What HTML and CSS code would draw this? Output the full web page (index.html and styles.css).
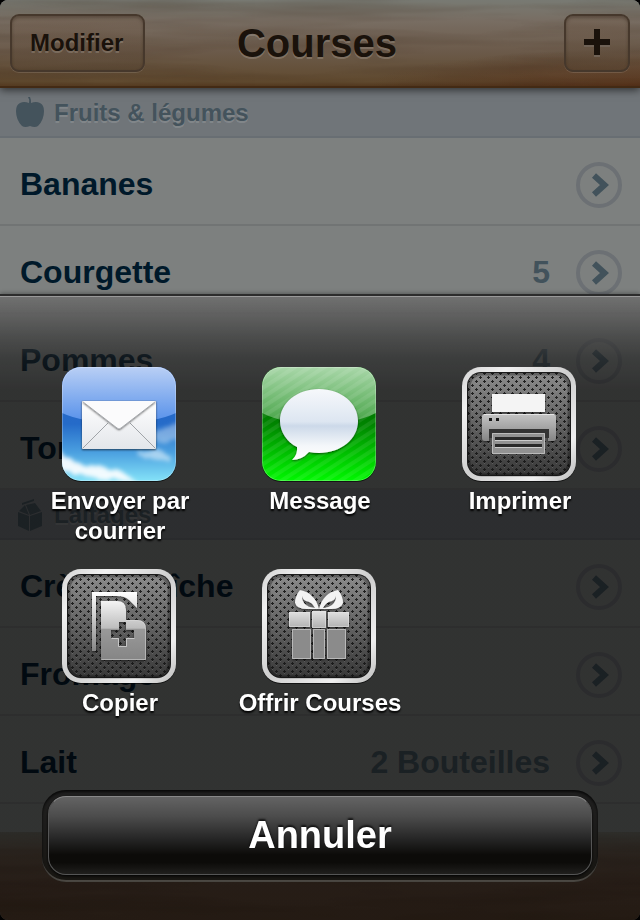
FILE: index.html
```html
<!DOCTYPE html>
<html lang="fr">
<head>
<meta charset="utf-8">
<meta name="viewport" content="width=device-width, initial-scale=1">
<title>Courses</title>
<link rel="stylesheet" href="styles.css">
</head>
<body>
<svg class="defs" aria-hidden="true">
  <defs>
    <filter id="grain" x="0" y="0" width="100%" height="100%" color-interpolation-filters="sRGB">
      <feTurbulence type="fractalNoise" baseFrequency="0.005 0.06" numOctaves="3" seed="8"/>
      <feColorMatrix values="0 0 0 0 0.2  0 0 0 0 0.12  0 0 0 0 0.06  2 0 0 0 -0.75"/>
    </filter>
    <filter id="cloud" x="-20%" y="-20%" width="140%" height="140%"><feTurbulence type="fractalNoise" baseFrequency="0.09" numOctaves="3" seed="3"/><feDisplacementMap in="SourceGraphic" scale="12" result="d"/><feGaussianBlur in="d" stdDeviation="2"/></filter>
    <filter id="soft" x="-20%" y="-20%" width="140%" height="150%"><feDropShadow dx="0" dy="1" stdDeviation="1" flood-color="#000" flood-opacity=".6"/></filter>
    <clipPath id="tile"><rect width="114" height="114" rx="19"/></clipPath>
    <linearGradient id="sky" x2="0" y2="1"><stop offset="0" stop-color="#2a63c4"/><stop offset=".5" stop-color="#256bc9"/><stop offset=".75" stop-color="#4ba0e0"/><stop offset="1" stop-color="#84e2f8"/></linearGradient>
    <linearGradient id="skygloss" x2="0" y2="1"><stop offset="0" stop-color="#b9cff5"/><stop offset="1" stop-color="#5590ea"/></linearGradient>
    <linearGradient id="paper" x2="0" y2="1"><stop offset="0" stop-color="#fff"/><stop offset="1" stop-color="#e3e6ea"/></linearGradient>
    <linearGradient id="green" x2="0" y2="1"><stop offset=".3" stop-color="#007000"/><stop offset=".5" stop-color="#008400"/><stop offset="1" stop-color="#00f800"/></linearGradient>
    <linearGradient id="greengloss" x2="0" y2="1"><stop offset="0" stop-color="#a9d7a9"/><stop offset="1" stop-color="#45a345"/></linearGradient>
    <linearGradient id="bubble" x2="0" y2="1"><stop offset="0" stop-color="#f6f8fb"/><stop offset=".46" stop-color="#dde6f1"/><stop offset=".52" stop-color="#ccd9e9"/><stop offset=".8" stop-color="#f4f7fa"/><stop offset="1" stop-color="#fff"/></linearGradient>
    <linearGradient id="frame" x2="1" y2="1"><stop offset="0" stop-color="#d4d4d4"/><stop offset=".2" stop-color="#f0f0f0"/><stop offset=".5" stop-color="#cfcfcf"/><stop offset=".8" stop-color="#efefef"/><stop offset="1" stop-color="#bbb"/></linearGradient>
    <linearGradient id="mesh" x2="0" y2="1"><stop offset="0" stop-color="#8a8a8a"/><stop offset=".5" stop-color="#626262"/><stop offset="1" stop-color="#383838"/></linearGradient>
    <linearGradient id="metal" x2="0" y2="1"><stop offset="0" stop-color="#e2e2e2"/><stop offset="1" stop-color="#b0b0b0"/></linearGradient>
    <linearGradient id="body" x2="0" y2="1"><stop offset="0" stop-color="#c4c4c4"/><stop offset="1" stop-color="#858585"/></linearGradient>
    <linearGradient id="page" x2="0" y2="1"><stop offset="0" stop-color="#f4f4f4"/><stop offset=".46" stop-color="#bdbdbd"/><stop offset=".48" stop-color="#999"/><stop offset="1" stop-color="#858585"/></linearGradient>
    <linearGradient id="backpage" gradientUnits="userSpaceOnUse" x1="0" y1="23" x2="0" y2="82"><stop offset="0" stop-color="#fff"/><stop offset="1" stop-color="#868686"/></linearGradient>
    <pattern id="holes" width="8" height="8" patternUnits="userSpaceOnUse"><path d="M1 2h3v1H1zM2 1h1v3H2zM5 6h3v1H5zM6 5h1v3H6z" fill="#161616" fill-opacity=".9"/><path d="M2 4h1v1H2zM6 0h1v1H6z" fill="#fff" fill-opacity=".15"/></pattern>
    <pattern id="stripes" width="10" height="8" patternUnits="userSpaceOnUse" patternTransform="rotate(-33)"><rect width="10" height="4" fill="#fff" fill-opacity=".08"/></pattern>
    <symbol id="plate" viewBox="0 0 116 116">
      <rect width="114" height="114" rx="19" y="1" fill="#000" fill-opacity=".6"/>
      <rect width="114" height="114" rx="19" fill="url(#frame)"/>
      <rect x="5" y="5" width="104" height="104" rx="14" fill="#222"/>
      <rect x="6" y="6" width="102" height="102" rx="13" fill="url(#mesh)"/>
      <rect x="6" y="6" width="102" height="102" rx="13" fill="url(#holes)"/>
      <rect x="7" y="7" width="100" height="101" rx="13" fill="none" stroke="#000" stroke-opacity=".3" stroke-width="3"/>
    </symbol>
    <symbol id="chevron" viewBox="0 0 46 46">
      <circle cx="23" cy="23" r="21" fill="none" stroke="#6c7074" stroke-width="4"/>
      <path d="M18 13.500L28.500 23 18 32.500" fill="none" stroke="#42525b" stroke-width="6"/>
    </symbol>
  </defs>
</svg>

<div class="app">
  <header class="bar">
    <svg class="wood" aria-hidden="true"><rect width="100%" height="100%" filter="url(#grain)"/></svg>
    <button class="bar-button" type="button">Modifier</button>
    <h1>Courses</h1>
    <button class="bar-button bar-button-add" type="button" aria-label="Ajouter">
      <svg width="26" height="28" viewBox="0 0 26 28" aria-hidden="true"><path d="M0 12h10V2h6v10h10v6H16v10h-6V18H0z" fill="#6f6256"/><path d="M0 10h10V0h6v10h10v6H16v10h-6V16H0z" fill="#1a120b"/></svg>
    </button>
  </header>

  <main>
    <section>
      <h2>
        <svg width="28" height="32" viewBox="0 0 28 32" aria-hidden="true"><path d="M12 0h2q1 2 1 6q5-2 9 0q4 2 4 8q0 9-6 15q-3 2-8 0q-5 2-8 0Q0 23 0 14Q0 8 4 6q4-2 9 0Q14 3 12 0z" fill="#44535c"/></svg>
        Fruits &amp; légumes
      </h2>
      <ul>
        <li><span class="name">Bananes</span><a href="#bananes" aria-label="Bananes"><svg><use href="#chevron"/></svg></a></li>
        <li><span class="name">Courgette</span><span class="amount">5</span><a href="#courgette" aria-label="Courgette"><svg><use href="#chevron"/></svg></a></li>
        <li><span class="name">Pommes</span><span class="amount">4</span><a href="#pommes" aria-label="Pommes"><svg><use href="#chevron"/></svg></a></li>
        <li><span class="name">Tomates</span><a href="#tomates" aria-label="Tomates"><svg><use href="#chevron"/></svg></a></li>
      </ul>
    </section>
    <section>
      <h2>
        <svg width="28" height="32" viewBox="0 0 28 32" aria-hidden="true"><path d="M2 13l11 4v15L2 27zM14 17l12-4v14l-12 5zM3 12l6-6 4 10zM10 6l9-2 6 8-11 4zM6 4l12-4v2L6 6z" fill="#44535c"/></svg>
        Laitages
      </h2>
      <ul>
        <li><span class="name">Crème fraîche</span><a href="#creme" aria-label="Crème fraîche"><svg><use href="#chevron"/></svg></a></li>
        <li><span class="name">Fromage</span><a href="#fromage" aria-label="Fromage"><svg><use href="#chevron"/></svg></a></li>
        <li><span class="name">Lait</span><span class="amount">2 Bouteilles</span><a href="#lait" aria-label="Lait"><svg><use href="#chevron"/></svg></a></li>
      </ul>
    </section>
  </main>
  <footer class="bar"><svg class="wood" aria-hidden="true"><rect width="100%" height="100%" filter="url(#grain)"/></svg></footer>
</div>

<div class="sheet" role="dialog" aria-label="Partager">
  <div class="actions">
    <button class="action" type="button">
      <svg viewBox="0 0 116 116" aria-hidden="true">
        <rect y="1" width="114" height="114" rx="19" fill="#000" fill-opacity=".6"/>
        <g clip-path="url(#tile)">
          <rect width="114" height="114" fill="url(#sky)"/>
          <g fill="#fff" filter="url(#cloud)">
            <path d="M-4 86l10 3 8 7 12 3 10-1 10 4 12 1 8 6 8 5H50l-20-4-14-3-20-4z" fill-opacity=".9"/>
            <path d="M74 88l12-4 10-1 8 3 6 6-12 2-10-3z" fill-opacity=".5"/>
            <path d="M94 66l10-7 14-2v18l-14 2-10-3z" fill-opacity=".35"/>
          </g>
          <path d="M0 0h114v46q-22 10-57 10T0 46z" fill="url(#skygloss)"/>
          <rect x=".5" y=".5" width="113" height="113" rx="18.500" fill="none" stroke="#fff" stroke-opacity=".25"/>
        </g>
        <g filter="url(#soft)"><rect x="20" y="34" width="74" height="48" fill="url(#paper)"/></g>
        <path d="M20.500 81.500L46 56M93.500 81.500L68 56" stroke="#a0a4a8" fill="none"/>
        <g filter="url(#soft)"><path d="M20 34h74L59 61q-2 2-4 0z" fill="#fbfbfc"/></g>
        <path d="M20.500 34.500L55 61q2 2 4 0l34.500-26.500" fill="none" stroke="#8f9398" stroke-opacity=".7"/>
      </svg>
      <span>Envoyer par courrier</span>
    </button>
    <button class="action" type="button">
      <svg viewBox="0 0 116 116" aria-hidden="true">
        <rect y="1" width="114" height="114" rx="19" fill="#000" fill-opacity=".6"/>
        <g clip-path="url(#tile)">
          <rect width="114" height="114" fill="url(#green)"/>
          <path d="M0 0h114v46q-22 11-57 11T0 46z" fill="url(#greengloss)"/>
          <rect width="114" height="114" fill="url(#stripes)"/>
          <rect x=".5" y=".5" width="113" height="113" rx="18.500" fill="none" stroke="#fff" stroke-opacity=".25"/>
        </g>
        <g filter="url(#soft)"><path d="M57 22c22 0 39 14 39 32S79 86 57 86q-5 0-10-1-7 8-17 8 6-6 5-13C25 75 18 65 18 54c0-18 17-32 39-32z" fill="url(#bubble)"/></g>
      </svg>
      <span>Message</span>
    </button>
    <button class="action" type="button">
      <svg viewBox="0 0 116 116" aria-hidden="true">
        <use href="#plate"/>
        <g filter="url(#soft)">
          <rect x="30" y="27" width="53" height="18" fill="#f4f4f4"/>
          <path d="M23 47h68q3 0 3 3v21q0 3-3 3h-5V62H27v12h-4q-3 0-3-3V50q0-3 3-3z" fill="url(#body)"/>
        </g>
        <path d="M27 62h60v9H27z" fill="#333"/>
        <path d="M27 51h3v3h-3zM34 51h3v3h-3z" fill="#151515"/>
        <path d="M22 47.500h70" stroke="#e5e5e5"/>
        <path d="M30 66h53v21H30z" fill="#929292"/>
        <path d="M30.500 66.500h52v20h-52z" fill="none" stroke="#bbb"/>
        <path d="M33 70h47v3H33zM33 77h47v3H33z" fill="#292929"/>
        <path d="M33 73.500h47M33 80.500h47" stroke="#ccc"/>
      </svg>
      <span>Imprimer</span>
    </button>
    <button class="action" type="button">
      <svg viewBox="0 0 116 116" aria-hidden="true">
        <use href="#plate"/>
        <g filter="url(#soft)">
          <path d="M30 23h45v16q-4-4-8-8-4-4-12-4H34v55h-4z" fill="url(#backpage)"/>
          <path fill-rule="evenodd" d="M39 32h16q9 0 9 9v10h11q9 0 9 9v31H39zM57 53v8h-8v8h8v8h7v-8h8v-8h-8v-8z" fill="url(#page)"/>
        </g>
        <path d="M49.500 69.500h7v8h8v-8h8" fill="none" stroke="#ddd" stroke-opacity=".7"/>
        <path d="M39.500 90.500h44V60q0-8-8-8.500H64" fill="none" stroke="#ddd" stroke-opacity=".5"/>
      </svg>
      <span>Copier</span>
    </button>
    <button class="action" type="button">
      <svg viewBox="0 0 116 116" aria-hidden="true">
        <use href="#plate"/>
        <g filter="url(#soft)">
          <path fill-rule="evenodd" d="M57 40Q53 24 38 21q-5 6-5 13 2 6 12 6h12zM53 39q-3-6-9-7-3-1-4-5 0 6 4 9 4 3 9 3zM57 40q4-16 19-19 5 6 5 13-2 6-12 6H57zM61 39q3-6 9-7 3-1 4-5 0 6-4 9-4 3-9 3z" fill="#f3f3f3"/>
          <path d="M27 43h21v15H27zM50 42h14v17H50zM66 43h21v15H66z" fill="url(#metal)"/>
          <path d="M30 60h19v30H30zM51 60h12v30H51zM65 60h19v30H65z" fill="#8b8b8b"/>
        </g>
        <path d="M27.500 43.500h20v14h-20zM50.500 42.500h13v16h-13zM66.500 43.500h20v14h-20zM30.500 60.500h18v29h-18zM51.500 60.500h11v29h-11zM65.500 60.500h18v29h-18z" fill="none" stroke="#e6e6e6" stroke-opacity=".5"/>
      </svg>
      <span>Offrir Courses</span>
    </button>
  </div>
  <div class="well"><button class="cancel" type="button">Annuler</button></div>
</div>
</body>
</html>
```
FILE: styles.css
```css
* { box-sizing: border-box; }

html { background: #000; }

body {
  margin: 0;
  font-family: "Liberation Sans", Helvetica, Arial, sans-serif;
  font-weight: bold;
}

button { font: inherit; cursor: pointer; }

.defs {
  position: absolute;
  width: 0;
  height: 0;
}

.app {
  display: flex;
  flex-direction: column;
  min-height: 100vh;
  overflow: hidden;
  border-radius: 8px;
  background: #7d807f;
}

.bar {
  position: relative;
  display: grid;
  grid-template-columns: 1fr auto 1fr;
  align-items: center;
  height: 88px;
  padding: 0 10px;
  border-bottom: 2px solid #432a14;
  background:
    radial-gradient(ellipse at 100% 100%, rgba(84, 38, 18, 0.5), transparent 30%),
    linear-gradient(#787a73, #786d62 25%, #6b5a4a 60%, #604a2f 95%, #543a20);
}

header.bar { z-index: 1; box-shadow: 0 2px 8px rgba(0, 0, 0, 0.6); }

footer.bar {
  margin-top: auto;
  border: 0;
  background: linear-gradient(#75776f, #69594b 25%, #614a3a 60%, #5c4532);
}

.wood {
  position: absolute;
  inset: 0;
  width: 100%;
  height: 100%;
  opacity: 0.22;
}

.bar-button {
  position: relative;
  display: flex;
  align-items: center;
  justify-content: center;
  justify-self: start;
  height: 58px;
  padding: 0 20px 0 18px;
  border: 2px solid #46382c;
  border-radius: 9px;
  background: linear-gradient(rgba(118, 98, 82, 0.5), rgba(84, 66, 48, 0.5));
  box-shadow: inset 0 2px 3px rgba(40, 25, 15, 0.35), 0 1px 0 rgba(255, 255, 255, 0.12);
  color: #1a120b;
  font-size: 24px;
  text-shadow: 0 2px 0 rgba(255, 255, 255, 0.18);
}

.bar-button-add {
  justify-self: end;
  padding: 0 18px;
}

h1 {
  position: relative;
  margin: 0;
  padding-right: 6px;
  color: #1a120b;
  font-size: 40px;
  text-shadow: 0 2px 0 rgba(255, 255, 255, 0.18);
}

h2 {
  display: flex;
  align-items: center;
  gap: 10px;
  height: 50px;
  margin: 0;
  padding: 2px 16px 0;
  border-bottom: 2px solid #686e73;
  background: #707579;
  color: #44535c;
  font-size: 24px;
  text-shadow: 0 2px 0 rgba(255, 255, 255, 0.14);
}

ul {
  margin: 0;
  padding: 0;
  list-style: none;
}

li {
  display: flex;
  align-items: center;
  height: 88px;
  padding: 8px 18px 0 20px;
  border-bottom: 2px solid #717474;
  color: #00192a;
  font-size: 32px;
}

.name { flex: 1; }

.name, .amount { padding-bottom: 2px; }

.amount {
  margin-right: 26px;
  color: #42525b;
}

li a, li svg {
  display: block;
  width: 46px;
  height: 46px;
}

.sheet {
  position: fixed;
  z-index: 2;
  right: 0;
  bottom: 0;
  left: 0;
  padding: 71px 20px 38px;
  border-top: 2px solid #2c2c2c;
  background: linear-gradient(
    rgba(112, 112, 112, 0.95),
    rgba(96, 96, 96, 0.92) 16px,
    rgba(58, 58, 58, 0.75) 42px,
    rgba(24, 24, 24, 0.64) 62px,
    rgba(2, 1, 1, 0.61) 94px);
  box-shadow: inset 0 1px 0 #9a9a9a, 0 -1px 4px rgba(0, 0, 0, 0.3);
}

.actions {
  display: grid;
  grid-template-columns: repeat(3, 1fr);
  row-gap: 23px;
}

.action {
  display: flex;
  flex-direction: column;
  align-items: center;
  gap: 3px;
  padding: 0;
  border: 0;
  background: none;
  color: #fff;
  font-size: 24px;
  line-height: 30px;
  text-shadow: 0 2px 2px #000;
}

.action svg {
  width: 116px;
  height: 116px;
}

.action span { max-width: 170px; }

.well {
  margin: 72px 22px 0;
  padding: 6px 6px 7px;
  border-radius: 24px;
  background: linear-gradient(#222, #181612);
  box-shadow: inset 0 2px 3px #080808, inset 0 -2px 0 #4b4843;
}

.cancel {
  display: block;
  width: 100%;
  height: 79px;
  padding: 0;
  border: 1px solid #555;
  border-top-color: #888;
  border-radius: 18px;
  background: linear-gradient(#636363, #4c4c4c 25%, #252525 55%, #0c0b09 75%, #0c0b09 85%, #201f1d);
  box-shadow: 0 1px 3px #000;
  color: #fff;
  font-size: 38px;
  text-shadow: 0 -2px 2px rgba(0, 0, 0, 0.7);
}
```
